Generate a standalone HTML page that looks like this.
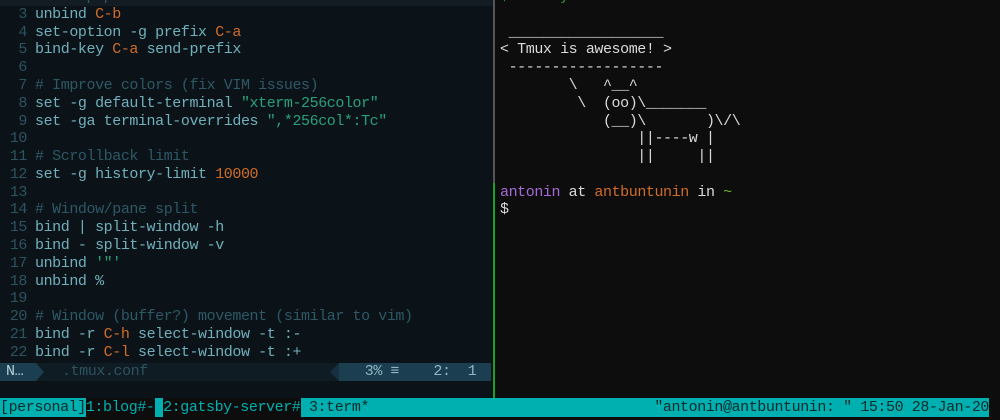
<!DOCTYPE html>
<html><head><meta charset="utf-8"><style>
body{margin:0;width:1000px;height:420px;background:#0d0d0d;overflow:hidden;position:relative;font-family:"Liberation Mono","DejaVu Sans Mono",monospace;font-size:15px;letter-spacing:-0.42px}
.l{position:absolute;left:0;width:493px;height:17.78px;line-height:17.78px;white-space:pre;color:#6fb0bc}
.n{display:inline-block;width:27px;text-align:right;color:#2c5360;margin-right:8px}
.c{color:#2d5866}.o{color:#d06c28}.s{color:#2aa07a}
#left{position:absolute;left:0;top:0;width:493px;height:398px;background:#0c1318}
.r{position:absolute;left:500px;white-space:pre;color:#dadada;line-height:17.78px;height:17.78px}
</style></head><body>
<div id="left"></div>
<div style="position:absolute;left:0;top:0;width:493px;height:6px;background:#131c22"></div>
<div class="l" style="top:-12px"><span class="n">2</span><span class="c"># remap prefix from 'C-b' to 'C-a'</span></div>
<div class="l" style="top:5.8px"><span class="n">3</span>unbind <span class="o">C-b</span></div>
<div class="l" style="top:23.6px"><span class="n">4</span>set-option -g prefix <span class="o">C-a</span></div>
<div class="l" style="top:41.3px"><span class="n">5</span>bind-key <span class="o">C-a</span> send-prefix</div>
<div class="l" style="top:59.1px"><span class="n">6</span></div>
<div class="l" style="top:76.9px"><span class="n">7</span><span class="c"># Improve colors (fix VIM issues)</span></div>
<div class="l" style="top:94.7px"><span class="n">8</span>set -g default-terminal <span class="s">"xterm-256color"</span></div>
<div class="l" style="top:112.5px"><span class="n">9</span>set -ga terminal-overrides <span class="s">",*256col*:Tc"</span></div>
<div class="l" style="top:130.2px"><span class="n">10</span></div>
<div class="l" style="top:148px"><span class="n">11</span><span class="c"># Scrollback limit</span></div>
<div class="l" style="top:165.8px"><span class="n">12</span>set -g history-limit <span class="o">10000</span></div>
<div class="l" style="top:183.6px"><span class="n">13</span></div>
<div class="l" style="top:201.4px"><span class="n">14</span><span class="c"># Window/pane split</span></div>
<div class="l" style="top:219.1px"><span class="n">15</span>bind | split-window -h</div>
<div class="l" style="top:236.9px"><span class="n">16</span>bind - split-window -v</div>
<div class="l" style="top:254.7px"><span class="n">17</span>unbind <span class="s">'"'</span></div>
<div class="l" style="top:272.5px"><span class="n">18</span>unbind %</div>
<div class="l" style="top:290.3px"><span class="n">19</span></div>
<div class="l" style="top:308px"><span class="n">20</span><span class="c"># Window (buffer?) movement (similar to vim)</span></div>
<div class="l" style="top:325.8px"><span class="n">21</span>bind -r <span class="o">C-h</span> select-window -t :-</div>
<div class="l" style="top:343.6px"><span class="n">22</span>bind -r <span class="o">C-l</span> select-window -t :+</div>
<div style="position:absolute;left:0;top:363px;width:491px;height:18px;background:#0f1c24"></div>
<div style="position:absolute;left:0;top:363px;width:36px;height:18px;background:#1b3f50;color:#b8d4dc;line-height:18px;padding-left:6px;box-sizing:border-box">N…</div>
<div style="position:absolute;left:36px;top:363px;width:0;height:0;border-top:9px solid transparent;border-bottom:9px solid transparent;border-left:8px solid #1b3f50"></div>
<div style="position:absolute;left:62px;top:363px;line-height:18px;color:#2c5360;white-space:pre">.tmux.conf</div>
<div style="position:absolute;left:330px;top:363px;width:0;height:0;border-top:9px solid transparent;border-bottom:9px solid transparent;border-right:9px solid #163040"></div>
<div style="position:absolute;left:339px;top:363px;width:152px;height:18px;background:#1b3f50;color:#8fb6c2;line-height:18px;white-space:pre">   3% ≡    2:  1</div>
<div style="position:absolute;left:338px;top:363px;width:0;height:0;border-top:9px solid transparent;border-bottom:9px solid transparent;border-right:8px solid #1b3f50"></div>
<div style="position:absolute;left:493px;top:0;width:2px;height:183px;background:#555"></div>
<div style="position:absolute;left:493px;top:183px;width:2px;height:215px;background:#1fa01f"></div>
<div class="r" style="top:-12px"><span style="color:#2aa02a">$ cowsay </span><span style="color:#d06c28">"Tmux is awesome!"</span></div>
<div class="r" style="top:23.6px"> __________________</div>
<div class="r" style="top:41.3px">&lt; Tmux is awesome! &gt;</div>
<div class="r" style="top:59.1px"> ------------------</div>
<div class="r" style="top:76.9px">        \   ^__^</div>
<div class="r" style="top:94.7px">         \  (oo)\_______</div>
<div class="r" style="top:112.5px">            (__)\       )\/\</div>
<div class="r" style="top:130.2px">                ||----w |</div>
<div class="r" style="top:148px">                ||     ||</div>
<div class="r" style="top:183.6px"><span style="color:#a66ad8">antonin</span> at <span style="color:#d06c28">antbuntunin</span> in <span style="color:#6ab82a">~</span></div>
<div class="r" style="top:201.4px">$</div>
<div style="position:absolute;left:0;top:398px;width:989px;height:19px;background:#00b0b0"></div>
<div style="position:absolute;left:86px;top:398px;width:69px;height:19px;background:#0d0d0d"></div>
<div style="position:absolute;left:163px;top:398px;width:138px;height:19px;background:#0d0d0d"></div>
<div style="position:absolute;left:0;top:398px;line-height:19px;white-space:pre;color:#0d2a2a">[personal]<span style="color:#00b0b0">1:blog#-</span><span style="color:#0d0d0d"> </span><span style="color:#00b0b0">2:gatsby-server#</span> 3:term*</div>
<div style="position:absolute;right:11px;top:398px;line-height:19px;white-space:pre;color:#0d2a2a">"antonin@antbuntunin: " 15:50 28-Jan-20</div>
</body></html>
